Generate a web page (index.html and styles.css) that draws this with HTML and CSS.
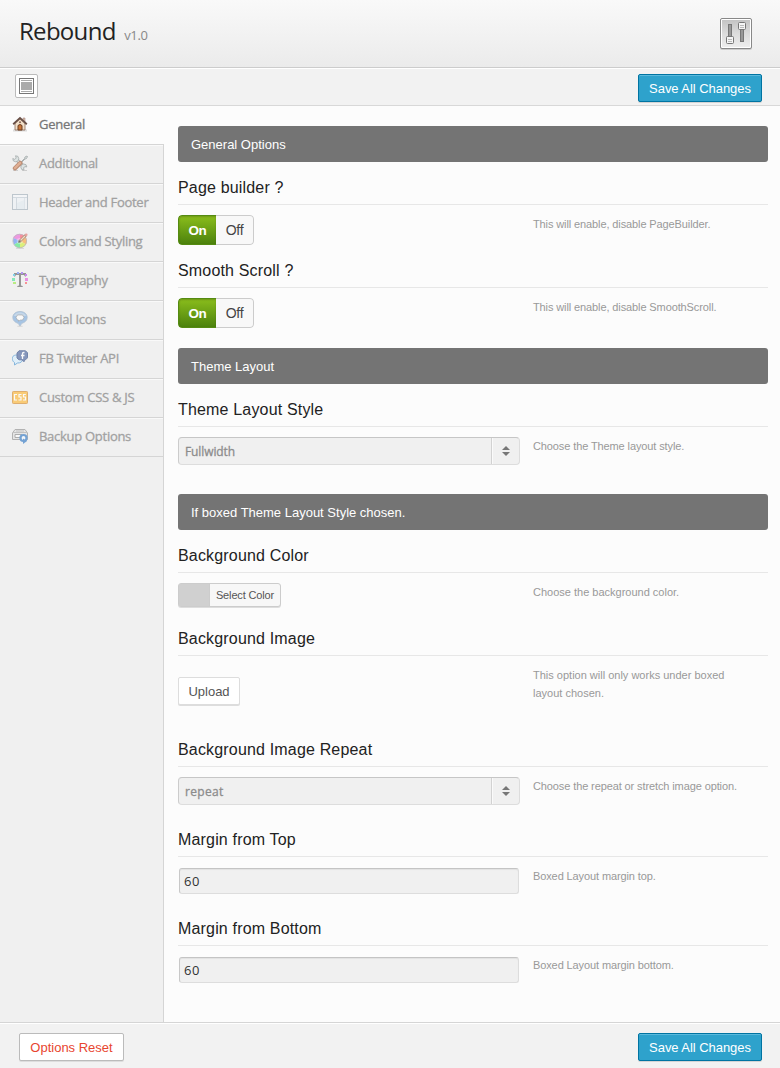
FILE: index.html
```html
<!DOCTYPE html>
<html lang="en">
<head>
<meta charset="utf-8">
<title>Rebound options</title>
<link rel="stylesheet" href="styles.css">
</head>
<body>
<div class="panel">
  <header class="header">
    <h1 class="brand">Rebound <small class="version">v1.0</small></h1>
    <svg class="logo" width="34" height="34" viewBox="0 0 34 34">
      <defs>
        <linearGradient id="lg" x1="0" y1="0" x2="0" y2="1"><stop offset="0" stop-color="#c4c4c4"/><stop offset=".5" stop-color="#dcdcdc"/><stop offset="1" stop-color="#ededed"/></linearGradient>
      </defs>
      <rect x="1" y="2" width="32" height="31" rx="2" fill="#ccc"/>
      <rect x="1.5" y="1.5" width="31" height="30" rx="1.5" fill="#fff" stroke="#888"/>
      <rect x="3" y="3" width="28" height="27" fill="url(#lg)"/>
      <rect x="9.500" y="7.500" width="3" height="14" fill="#999" stroke="#777"/>
      <rect x="21.500" y="10.500" width="3" height="14" fill="#999" stroke="#777"/>
      <rect x="7.500" y="19.500" width="7" height="7" rx="1" fill="#f5f5f5" stroke="#777"/>
      <path d="M9 22.500h4M9 24.500h4" stroke="#bbb"/>
      <rect x="19.500" y="5.500" width="7" height="7" rx="1" fill="#f5f5f5" stroke="#777"/>
      <path d="M21 8.500h4M21 10.500h4" stroke="#bbb"/>
    </svg>
  </header>

  <div class="toolbar">
    <button class="expand" aria-label="Expand options">
      <svg width="15" height="16" viewBox="0 0 15 16"><rect x=".5" y=".5" width="14" height="15" fill="#fff" stroke="#777"/><path d="M2 2.500h11M2 13.500h11" stroke="#aaa"/><rect x="2" y="4" width="11" height="8" fill="#aaa"/></svg>
    </button>
    <button class="btn save">Save All Changes</button>
  </div>

  <div class="main">
    <nav class="sidebar">
      <a class="item active"><svg width="16" height="16" viewBox="0 0 16 16"><path d="M1 14.500h14" stroke="#ddd" stroke-width="2"/><path d="M11 2h2v4h-2z" fill="#d8c0aa" stroke="#a88" stroke-width=".6"/><path d="M3 7l5-4.500L13 7v7H3z" fill="#f2dfc8" stroke="#8a6a58" stroke-width=".8"/><path d="M1.200 8.200L8 2l6.800 6.200" fill="none" stroke="#695047" stroke-width="1.900"/><path d="M6 14V9.500q2-2 4 0V14z" fill="#c8763a" stroke="#6a3c20"/><circle cx="8" cy="6.300" r="1" fill="#865"/></svg><span>General</span></a>
      <a class="item"><svg width="16" height="16" viewBox="0 0 16 16"><path d="M1 15.500h5M10 15.500h5" stroke="#bbb"/><path d="M4 4l8.500 8.500" stroke="#7d8888" stroke-width="3.600"/><path d="M4 4l8.500 8.500" stroke="#dce4e4" stroke-width="2"/><path d="M3.500 .8a3 3 0 11-2.700 2.700l2 .9 1.400-1.400zM12 15a3 3 0 112.800-3l-2-.4-1.200 1.200z" fill="#d3dddd" stroke="#7d8888" stroke-width=".8"/><path d="M8.500 7.500l4-4 .5-1.500 2-1 .5.5-1 2-1.500.5-4 4z" fill="#dce4e4" stroke="#7d8888" stroke-width=".9"/><path d="M3 13.300L8.300 8" stroke="#a35c37" stroke-width="4.400" stroke-linecap="round"/><path d="M3 13L8 8" stroke="#d98e64" stroke-width="2.400" stroke-linecap="round"/></svg><span>Additional</span></a>
      <a class="item"><svg width="16" height="16" viewBox="0 0 16 16"><rect x=".5" y=".5" width="15" height="15" fill="#eef3f7" stroke="#a3b0bb"/><path d="M1 3.500h14M4.500 4v11" stroke="#c3ced7"/><path d="M12.500 4v11" stroke="#d5dfe6"/><path d="M1.500 2h13" stroke="#fff"/><path d="M5 15V9l7-3v9z" fill="#e2eaf0"/></svg><span>Header and Footer</span></a>
      <a class="item"><svg width="16" height="16" viewBox="0 0 16 16"><path d="M4 15.500h8" stroke="#ccc"/><path d="M8 8L1 5A7.300 7.300 0 018 1z" fill="#ee6ad8"/><path d="M8 8V1a7 7 0 016 3.500z" fill="#ff5c70"/><path d="M8 8l6-3.500a7 7 0 010 7z" fill="#ffa63c"/><path d="M8 8l6 3.500a7 7 0 01-6 3.500z" fill="#d0f03c"/><path d="M8 8v7a7 7 0 01-6-3.500z" fill="#4deb7c"/><path d="M8 8l-6 3.500A7 7 0 011.500 5z" fill="#6096f5"/><circle cx="7.700" cy="8" r="3" fill="#fff" opacity=".35"/><circle cx="7.700" cy="8" r="6.800" fill="none" stroke="#a099a8" stroke-width=".8"/><path d="M7 9l7-7" stroke="#8a563b" stroke-width="2.600"/><path d="M7 9l6-6" stroke="#f4d4a8" stroke-width="1.200"/><path d="M6.500 9.500l2-2" stroke="#333" stroke-width="1.300"/><circle cx="14.200" cy="1.800" r="1.400" fill="#e37c76"/></svg><span>Colors and Styling</span></a>
      <a class="item"><svg width="16" height="16" viewBox="0 0 16 16"><path d="M2 1h12v3.500h-1L12 3H9v10.500l1.700.5v1H5.300v-1l1.700-.5V3H4L3 4.500H2z" fill="#666"/><rect x="1" y="2" width="2" height="2" fill="#46c0e8"/><rect x="0" y="6" width="3" height="3" fill="#50e49c"/><rect x="1" y="10" width="3" height="2" fill="#9dea47"/><rect x="5" y="0" width="2" height="2" fill="#6b8cff"/><rect x="9" y="0" width="2" height="2" fill="#9261f3"/><rect x="13" y="2" width="2" height="2" fill="#bc52ee"/><rect x="13" y="6" width="3" height="3" fill="#e75ddb"/><rect x="13" y="10" width="2" height="2" fill="#ff6060"/></svg><span>Typography</span></a>
      <a class="item"><svg width="16" height="16" viewBox="0 0 16 16"><ellipse cx="8" cy="15.200" rx="3" ry=".7" fill="#ccc"/><path d="M8 .5c4.200 0 7.200 2.500 7.200 6 0 3.700-3.200 5-5.500 6L8 15l-1.700-2.500C4 11.500.8 10.200.8 6.500.8 3 3.800.5 8 .5z" fill="#7faede" stroke="#90a8c0" stroke-width=".8"/><path d="M2 5c1-5 11-5 12 0z" fill="#b0cae4"/><path d="M5.500 4h5L12 6.500 10.500 9H8.500L6.500 10.200V9H5.500L4 6.500z" fill="#fff" stroke="#777" stroke-width=".6"/></svg><span>Social Icons</span></a>
      <a class="item"><svg width="16" height="16" viewBox="0 0 16 16"><path d="M5 5C1 5 0 7 .5 9.500.7 11 1.500 12 2.500 12.500V15l3-2c3 0 5-1 5.200-4z" fill="#d8efff" stroke="#4d98d3"/><path d="M7 .8h6.500l2 2v5l-2 2h-1l-.5 2-2-2H7L5 8V3z" fill="#4d679f" stroke="#304b85"/><path d="M12.500 2.500h-1q-1 0-1 1.200V9M9 5.500h3.500" fill="none" stroke="#fff" stroke-width="1.300"/></svg><span>FB Twitter API</span></a>
      <a class="item"><svg width="16" height="16" viewBox="0 0 16 16"><rect x=".5" y="2.500" width="15" height="12" rx=".8" fill="#ffb836" stroke="#d58b2d"/><path d="M5 5.500H2.500v5.500H5M9.500 5.500H7V8h2v3H6.500M13.800 5.500h-2.300V8h2v3H11" fill="none" stroke="#fff" stroke-width="1.200"/></svg><span>Custom CSS &amp; JS</span></a>
      <a class="item"><svg width="16" height="16" viewBox="0 0 16 16"><path d="M.5 5L3 1.500h10L15.500 5v6.500H.5z" fill="#e2e2e2" stroke="#929292"/><path d="M1 4.500h14M4 3h8" stroke="#aaa"/><path d="M10 6.500H3v3h5" fill="#fff" stroke="#888"/><circle cx="11.500" cy="10" r="3" fill="#f4f8ff" stroke="#3279c5" stroke-width="2.200"/><path d="M11 10.500v5.500l4-3z" fill="#3279c5"/></svg><span>Backup Options</span></a>
    </nav>

    <main class="content">
      <h2 class="bar">General Options</h2>
      <section class="option">
        <h3 class="title">Page builder ?</h3>
        <div class="row"><div class="control"><div class="switch"><span class="on">On</span><span class="off">Off</span></div></div><p class="hint">This will enable, disable PageBuilder.</p></div>
      </section>
      <section class="option">
        <h3 class="title">Smooth Scroll ?</h3>
        <div class="row"><div class="control"><div class="switch"><span class="on">On</span><span class="off">Off</span></div></div><p class="hint">This will enable, disable SmoothScroll.</p></div>
      </section>

      <h2 class="bar spaced">Theme Layout</h2>
      <section class="option">
        <h3 class="title">Theme Layout Style</h3>
        <div class="row tall"><div class="control"><div class="select"><span class="value">Fullwidth</span><span class="arrows"><svg width="8" height="10" viewBox="0 0 8 10"><path d="M0 4L4 0l4 4zM0 6h8l-4 4z" fill="#777"/></svg></span></div></div><p class="hint">Choose the Theme layout style.</p></div>
      </section>

      <h2 class="bar spaced">If boxed Theme Layout Style chosen.</h2>
      <section class="option">
        <h3 class="title">Background Color</h3>
        <div class="row"><div class="control"><div class="picker"><span class="swatch"></span><span class="pick">Select Color</span></div></div><p class="hint loose">Choose the background color.</p></div>
      </section>
      <section class="option">
        <h3 class="title">Background Image</h3>
        <div class="row upload-row"><div class="control"><button class="btn upload">Upload</button></div><p class="hint loose">This option will only works under boxed layout chosen.</p></div>
      </section>
      <section class="option">
        <h3 class="title">Background Image Repeat</h3>
        <div class="row tall"><div class="control"><div class="select"><span class="value wide">repeat</span><span class="arrows"><svg width="8" height="10" viewBox="0 0 8 10"><path d="M0 4L4 0l4 4zM0 6h8l-4 4z" fill="#777"/></svg></span></div></div><p class="hint">Choose the repeat or stretch image option.</p></div>
      </section>
      <section class="option">
        <h3 class="title">Margin from Top</h3>
        <div class="row field"><div class="control"><input class="input" value="60"></div><p class="hint">Boxed Layout margin top.</p></div>
      </section>
      <section class="option">
        <h3 class="title">Margin from Bottom</h3>
        <div class="row field"><div class="control"><input class="input" value="60"></div><p class="hint">Boxed Layout margin bottom.</p></div>
      </section>
    </main>
  </div>

  <footer class="footer">
    <button class="btn reset">Options Reset</button>
    <button class="btn save">Save All Changes</button>
  </footer>
</div>
</body>
</html>
```
FILE: styles.css
```css
* { box-sizing: border-box; }
body { margin: 0; font-family: "Liberation Sans", Arial, sans-serif; background: #fcfcfc; }
h1, h2, h3, p { margin: 0; font-weight: normal; }
button, input { font-family: inherit; margin: 0; }

.panel { width: 780px; height: 1068px; display: flex; flex-direction: column; overflow: hidden; }

.header {
  height: 68px; padding: 16px 27px 0 19px;
  display: flex; justify-content: space-between; align-items: flex-start;
  background: linear-gradient(#f9f9f9, #ebebeb);
  border-bottom: 1px solid #ccc;
}
.brand { font: 24px/30px "Open Sans", sans-serif; color: #222; letter-spacing: -.7px; }
.version { font-size: 13px; color: #888; margin-left: 3px; letter-spacing: -.3px; }
.logo { display: block; margin-top: 1px; }

.toolbar {
  height: 38px; padding: 5px 18px 0 15px;
  display: flex; justify-content: space-between; align-items: flex-start;
  background: #f2f2f2; border-bottom: 1px solid #d8d8d8; box-shadow: inset 0 1px #fff;
}
.expand {
  width: 23px; height: 24px; padding: 0; margin-top: 1px;
  display: flex; align-items: center; justify-content: center;
  background: #fff; border: 1px solid #bbb; border-radius: 2px;
}

.btn { display: flex; align-items: center; justify-content: center; padding: 0; border-radius: 2px; white-space: nowrap; }
.save {
  width: 124px; height: 28px; margin-top: 1px;
  font-size: 13px; letter-spacing: -.05px; color: #fff;
  background: #2ea2cc; border: 1px solid #0074a2;
  box-shadow: inset 0 1px rgba(120, 200, 230, .6), 0 1px rgba(0, 0, 0, .12);
}

.main { flex: 1; display: flex; min-height: 0; }
.sidebar { width: 164px; background: #f0f0f0; border-right: 1px solid #d5d5d5; }
.item {
  height: 39px; padding-left: 12px; display: flex; align-items: center; gap: 11px;
  font: 13px/38px "Open Sans", sans-serif; letter-spacing: -.28px; color: #a1a1a1;
  -webkit-text-stroke: .3px currentColor;
  border-bottom: 1px solid #d5d5d5; box-shadow: inset 0 1px #f9f9f9;
}
.item span { white-space: nowrap; padding-bottom: 2px; line-height: 36px; }
.item svg { opacity: .65; flex: none; margin-bottom: 2px; }
.item.active { width: 164px; color: #777; background: #fcfcfc; box-shadow: none; }
.item.active svg { opacity: 1; }

.content { flex: 1; padding: 20px 12px 0 14px; background: #fcfcfc; }
.bar {
  height: 36px; padding-left: 13px; margin-bottom: 9px;
  font-size: 13px; line-height: 37px; color: #fff;
  background: #747474; border-radius: 3px;
}
.bar.spaced { margin-top: 11px; }
.title { font-size: 16px; line-height: 33px; letter-spacing: .17px; color: #222; border-bottom: 1px solid #e7e7e7; }
.row { height: 49px; padding-top: 10px; display: flex; }
.row.tall { height: 56px; }
.row.field { height: 55px; padding-top: 11px; }
.row.upload-row { height: 77px; }
.control { width: 355px; flex: none; }
.hint { width: 215px; font-size: 11px; line-height: 18px; letter-spacing: -.11px; color: #999; }
.hint.loose { letter-spacing: 0; }
.field .hint { margin-top: -1px; }

.switch {
  width: 76px; height: 30px; display: flex; overflow: hidden;
  font-size: 14px; letter-spacing: -.3px; text-align: center;
  border-radius: 4px; background: #f8f8f8;
}
.on { width: 38px; color: #fff; font-weight: bold; font-size: 13.5px; background: linear-gradient(#8abd1c, #4c820d); border: 1px solid #558b12; border-right: 0; line-height: 29px; border-radius: 4px 0 0 4px; box-shadow: inset 0 1px 2px rgba(0, 0, 0, .2); }
.off { width: 38px; color: #444; border: 1px solid #ccc; border-left: 0; line-height: 29px; border-radius: 0 4px 4px 0; }

.select {
  width: 342px; height: 28px; display: flex; background: #f0f0f0;
  border: 1px solid #ddd; border-top-color: #c6c6c6; border-left-color: #ccc; border-radius: 4px;
}
.value { flex: 1; padding-left: 6px; font: 12px/28px "Open Sans", sans-serif; letter-spacing: -.1px; color: #8c8c8c; -webkit-text-stroke: .3px currentColor; }
.value.wide { letter-spacing: .3px; }
.arrows { width: 28px; display: flex; align-items: center; justify-content: center; border-left: 1px solid #d2d2d2; box-shadow: inset 1px 0 #fafafa; }

.picker { width: 103px; height: 24px; display: flex; border: 1px solid #ccc; border-radius: 3px; background: #f7f7f7; box-shadow: 0 1px #ddd; }
.swatch { width: 31px; background: #d0d0d0; border-right: 1px solid #ccc; }
.pick { flex: 1; text-align: center; font-size: 11px; line-height: 23px; letter-spacing: -.15px; color: #555; }
.upload { width: 62px; height: 28px; margin-top: 11px; font-size: 13px; color: #555; background: #fff; border: 1px solid #ddd; box-shadow: 0 1px #ddd; }
.input {
  display: block; width: 340px; height: 26px; margin-left: 1px; padding: 0 4px 1px;
  font: 13px/22px "Open Sans", sans-serif; letter-spacing: .5px; color: #333; background: #f0f0f0;
  border: 1px solid #ddd; border-top-color: #c4c4c4; border-left-color: #c8c8c8; border-radius: 3px;
  box-shadow: inset 0 1px 1px rgba(0, 0, 0, .06); outline: 0;
}

.footer {
  height: 46px; padding: 9px 18px 0 19px;
  display: flex; justify-content: space-between; align-items: flex-start;
  background: #f2f2f2; border-top: 1px solid #d5d5d5; box-shadow: inset 0 1px #fff;
}
.reset { width: 105px; height: 28px; margin-top: 1px; font-size: 13px; letter-spacing: 0; color: #e8452f; background: #fff; border: 1px solid #bbb; box-shadow: 0 1px #ddd; }
```
